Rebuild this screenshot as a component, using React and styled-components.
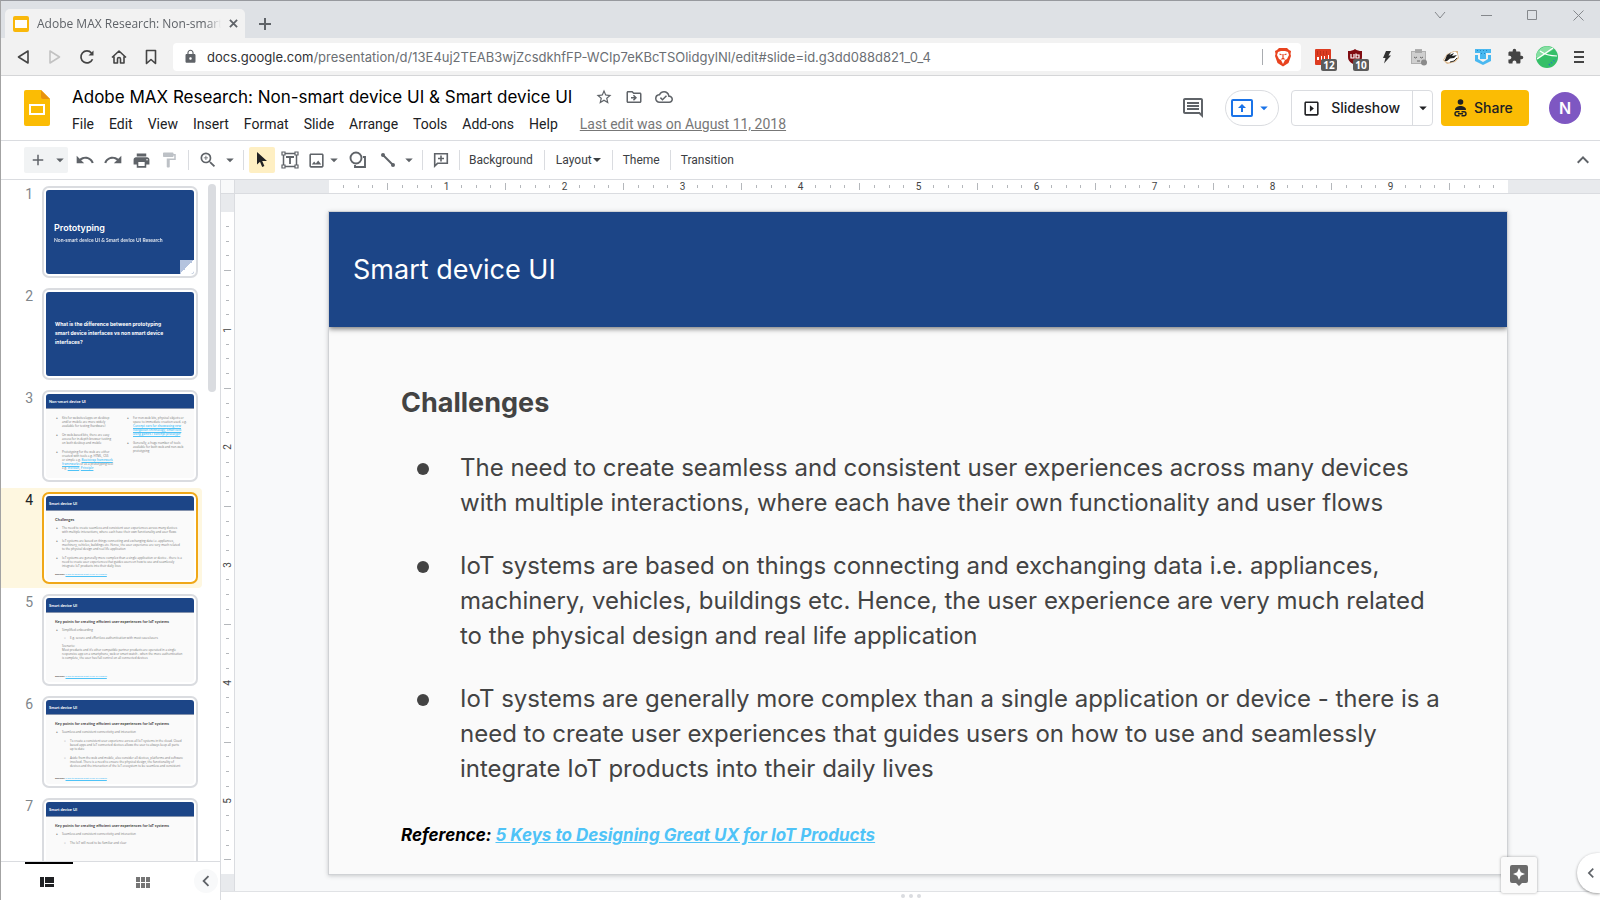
import React from 'react';
import styled, { createGlobalStyle, css } from 'styled-components';
import {
  MdUndo, MdRedo, MdPrint, MdFormatPaint, MdZoomIn, MdArrowDropDown, MdAdd, MdLock, MdExtension,
  MdStarBorder, MdOutlineDriveFileMove, MdOutlineCloudDone, MdOutlineComment, MdOutlineSlideshow,
  MdOutlinePhoto, MdKeyboardArrowUp, MdChevronLeft,
} from 'react-icons/md';

const GlobalStyle = createGlobalStyle`
  * { box-sizing: border-box; }
  body { margin: 0; font-family: Roboto, "Liberation Sans", sans-serif; color: #202124; background: #fff; }
  button { border: 0; padding: 0; margin: 0; background: none; font: inherit; color: inherit; }
  a { color: inherit; }
  h1, h2, ul, ol, p { margin: 0; padding: 0; font: inherit; }
  ul, ol { list-style: none; }
  svg { display: block; flex: none; }
`;

const uiFont = '"Open Sans", "Noto Sans", sans-serif';
const slideFont = 'Inter, "Open Sans", sans-serif';
const miniFont = 'Lato, "Open Sans", sans-serif';
const blue = '#1c4587';
const linkBlue = '#4fc3f7';

const Window = styled.div`
  display: flex;
  flex-direction: column;
  height: 100vh;
  overflow: hidden;
  border-top: 1px solid #97999e;
  border-left: 1px solid #a3a3a3;
`;

/* Browser chrome */
const TabStrip = styled.div`
  display: flex;
  align-items: flex-end;
  height: 37px;
  padding-left: 4px;
  background: #dee1e5;
`;
const Tab = styled.div`
  display: flex;
  align-items: center;
  width: 240px;
  height: 29px;
  padding-left: 8px;
  border-radius: 5px 5px 0 0;
  background: #f2f2f2;
`;
const TabTitle = styled.span`
  width: 184px;
  margin: 0 3px 0 8px;
  overflow: hidden;
  white-space: nowrap;
  font: 12px/20px ${uiFont};
  color: #5f6368;
  mask-image: linear-gradient(to right, #000 92%, transparent);
`;
const IconButton = styled.button`
  display: flex;
  align-items: center;
  justify-content: center;
  width: ${(p) => p.$w || 32}px;
  height: ${(p) => p.$h || 28}px;
  flex: none;
  color: ${(p) => p.$color || '#5f6368'};
  background: ${(p) => p.$bg || 'none'};
  border-radius: 2px;
`;
const WindowControls = styled.div`
  display: flex;
  align-self: flex-start;
  margin-left: auto;
  margin-right: -1px;
`;
const NavBar = styled.div`
  display: flex;
  align-items: center;
  height: 38px;
  padding-left: 6px;
  padding-right: 5px;
  background: #f2f2f2;
  border-bottom: 1px solid #d5d6d8;
`;
const UrlBox = styled.form`
  display: flex;
  align-items: center;
  flex: 1;
  height: 28px;
  margin: 0 6px;
  padding-left: 10px;
  background: #fff;
  border-radius: 4px;
`;
const UrlText = styled.div`
  flex: 1;
  margin-left: 9px;
  font: 13px/20px Inter, sans-serif;
  white-space: nowrap;
  color: #6b6f74;
  b { font-weight: 400; color: #303134; }
`;
const UrlEnd = styled.div`
  display: flex;
  align-items: center;
  height: 16px;
  padding: 0 9px 0 11px;
  border-left: 1px solid #a9acb0;
`;
const ExtButton = styled(IconButton)`
  position: relative;
`;
const Badge = styled.span`
  position: absolute;
  right: 2px;
  bottom: 0;
  width: 16px;
  border-radius: 2px;
  background: #5c5c5c;
  color: #fff;
  font: 700 10px/12px ${uiFont};
  text-align: center;
`;

/* Document header */
const Header = styled.header`
  display: flex;
  align-items: center;
  height: 65px;
  padding: 0 19px 0 23px;
  border-bottom: 1px solid #dadce0;
  background: #fff;
`;
const TitleBlock = styled.div`
  display: flex;
  flex-direction: column;
  gap: 4px;
  margin-left: 22px;
  padding-top: 3px;
  flex: 1;
`;
const TitleRow = styled.div`
  display: flex;
  align-items: center;
  height: 24px;
  color: #5f6368;
`;
const DocTitle = styled.h1`
  margin-right: 17px;
  font: 17px/24px Inter, sans-serif;
  color: #000;
  white-space: nowrap;
`;
const MenuRow = styled.nav`
  display: flex;
  align-items: center;
  gap: 15px;
  height: 22px;
  font-size: 14px;
  line-height: 22px;
  white-space: nowrap;
`;
const LastEdit = styled.a`
  margin-left: 7px;
  color: #777;
`;
const Actions = styled.div`
  display: flex;
  align-items: center;
  height: 36px;
  font: 500 14px/20px Inter, sans-serif;
`;
const Pill = styled.button`
  display: flex;
  align-items: center;
  justify-content: center;
  gap: 2px;
  width: 54px;
  height: 36px;
  margin: 0 12px 0 20px;
  border: 1px solid #dadce0;
  border-radius: 18px;
  color: #1a73e8;
`;
const SplitButton = styled.div`
  display: flex;
  height: 36px;
  border: 1px solid #dadce0;
  border-radius: 4px;
`;
const SlideshowButton = styled.button`
  display: flex;
  align-items: center;
  gap: 10px;
  padding: 0 12px 0 10px;
`;
const SplitArrow = styled.button`
  display: flex;
  align-items: center;
  justify-content: center;
  width: 20px;
  border-left: 1px solid #dadce0;
`;
const ShareButton = styled.button`
  display: flex;
  align-items: center;
  gap: 6px;
  height: 36px;
  width: 88px;
  margin: 0 20px 0 8px;
  padding-left: 12px;
  border-radius: 4px;
  background: #fbbc04;
`;
const Avatar = styled.button`
  width: 32px;
  height: 32px;
  border-radius: 50%;
  background: #7e57c2;
  color: #fff;
  font: 600 16px/32px Inter, sans-serif;
`;

/* Toolbar */
const Toolbar = styled.div`
  display: flex;
  align-items: center;
  height: 39px;
  padding: 0 7px 0 23px;
  border-bottom: 1px solid #dadce0;
  color: #5f6368;
`;
const Divider = styled.span`
  width: 1px;
  height: 20px;
  flex: none;
  margin: 0 ${(p) => p.$gap || 5}px;
  background: #dadce0;
`;
const TextButton = styled.button`
  display: flex;
  align-items: center;
  height: 26px;
  padding: 0 4px;
  font: 12px/16px Roboto, sans-serif;
  color: #3c4043;
`;
const AddGroup = styled.div`
  display: flex;
  margin-right: 3px;
  background: #f1f3f4;
  border-radius: 2px;
`;
const Spacer = styled.span`
  flex: ${(p) => p.$grow || 1};
`;

/* Workspace */
const Workspace = styled.main`
  display: flex;
  flex: 1;
  min-height: 0;
`;
const Sidebar = styled.aside`
  display: flex;
  flex-direction: column;
  width: 220px;
  flex: none;
  border-right: 1px solid #dadce0;
`;
const Film = styled.div`
  display: flex;
  flex: 1;
  min-height: 0;
  overflow: hidden;
  gap: 6px;
`;
const FilmList = styled.ol`
  display: flex;
  flex-direction: column;
  gap: 2px;
  padding-top: 2px;
  width: 201px;
`;
const FilmItem = styled.li`
  display: flex;
  flex: none;
  height: 100px;
  padding-top: 4px;
  border-radius: 0 4px 4px 0;
  background: ${(p) => (p.$active ? '#fef7e0' : 'none')};
`;
const SlideNumber = styled.span`
  width: 41px;
  padding: 0 9px 0 0;
  text-align: right;
  font-size: 14px;
  line-height: 16px;
  color: ${(p) => (p.$active ? '#202124' : '#80868b')};
`;
const Card = styled.div`
  width: 156px;
  height: 92px;
  padding: 2px;
  border: 2px solid ${(p) => (p.$active ? '#f0a818' : '#dadce0')};
  border-radius: 7px;
  background: #fff;
`;
const Thumb = styled.div`
  position: relative;
  height: 84px;
  overflow: hidden;
  border-radius: 3px;
  background: ${(p) => (p.$cover ? blue : '#fafafa')};
  color: ${(p) => (p.$cover ? '#fff' : '#777')};
  font: 3px/4px ${uiFont};
  white-space: nowrap;
`;
const CoverTitle = styled.div`
  padding: 32px 8px 2px;
  font: 600 9px/12px ${slideFont};
`;
const CoverSub = styled.div`
  padding: 0 8px;
  font: 700 5px/8px ${miniFont};
  opacity: 0.85;
`;
const CoverText = styled.div`
  padding: 28px 9px;
  font: 700 5px/9px ${slideFont};
`;
const Fold = styled.span`
  position: absolute;
  right: 0;
  bottom: 0;
  width: 14px;
  height: 14px;
  background: linear-gradient(135deg, #b4c3de 50%, #fff 50%);
`;
const ThumbHead = styled.div`
  height: 15px;
  padding-left: 3px;
  background: ${blue};
  border-bottom: 1px solid #8492ac;
  color: #fff;
  font: 700 4px/15px ${miniFont};
`;
const ThumbHeading = styled.div`
  height: 5px;
  margin: 6px 0 4px 9px;
  font: 700 4px/5px ${miniFont};
  color: #444;
`;
const MiniList = styled.ul`
  display: flex;
  flex-direction: column;
  gap: ${(p) => p.$gap || 5}px;
  margin-left: 16px;
`;
const MiniItem = styled.li`
  position: relative;
  padding-left: ${(p) => (p.$sub ? 8 : 0)}px;
  &::before {
    content: "${(p) => (p.$sub ? '○' : p.$plain ? '' : '●')}";
    position: absolute;
    left: ${(p) => (p.$sub ? 2 : -6)}px;
  }
`;
const MiniLine = styled.span`
  display: block;
`;
const MiniLink = styled.a`
  color: ${linkBlue};
  font-weight: 600;
`;
const MiniColumns = styled.div`
  display: grid;
  grid-template-columns: 71px 1fr;
  padding-top: 7px;
`;
const MiniRef = styled.div`
  position: absolute;
  left: 9px;
  bottom: 3px;
  font-size: 2px;
  font-weight: 700;
  font-style: italic;
  color: #444;
`;
const ScrollThumb = styled.div`
  width: 8px;
  height: 208px;
  margin-top: 4px;
  border-radius: 4px;
  background: #dadce0;
`;
const ViewBar = styled.div`
  display: flex;
  align-items: center;
  height: 39px;
  flex: none;
  border-top: 1px solid #dadce0;
  padding: 0 2px 0 24px;
`;
const ViewTab = styled.button`
  display: flex;
  align-items: center;
  justify-content: center;
  width: 48px;
  height: 38px;
  padding-right: ${(p) => (p.$active ? 4 : 0)}px;
  border-top: 2px solid ${(p) => (p.$active ? '#000' : 'transparent')};
  color: ${(p) => (p.$active ? '#202124' : '#757575')};
`;
const CollapseButton = styled.button`
  display: flex;
  align-items: center;
  justify-content: center;
  width: 24px;
  height: 24px;
  border-radius: 50%;
  background: #f8f9fa;
  color: #5f6368;
`;

/* Rulers */
const rulerBar = css`
  display: flex;
  background: #e8eaed;
  font: 10px/12px Roboto, sans-serif;
  color: #444;
`;
const VColumn = styled.div`
  display: flex;
  flex-direction: column;
  flex: none;
`;
const RulerCorner = styled.div`
  height: 14px;
  background: #f8f9fa;
  border-right: 1px solid #dadce0;
  border-bottom: 1px solid #dadce0;
`;
const VRuler = styled.div`
  ${rulerBar}
  flex: 1;
  flex-direction: column;
  width: 14px;
  padding: 18px 0 17px;
  border-right: 1px solid #dadce0;
`;
const RulerFoot = styled.div`
  height: 9px;
  border-top: 1px solid #e0e2e5;
`;
const HRuler = styled.div`
  ${rulerBar}
  height: 14px;
  flex: none;
  padding: 0 92px 0 94px;
  border-bottom: 1px solid #dadce0;
`;
const Track = styled.div`
  display: flex;
  flex: 1;
  flex-direction: ${(p) => (p.$vertical ? 'column' : 'row')};
  padding: ${(p) => (p.$vertical ? '7px 0' : '0 7px')};
  background: #fff;
`;
const Cell = styled.span`
  display: flex;
  flex: 1 1 0;
  min-width: 0;
  min-height: 0;
  align-items: center;
  justify-content: center;
`;
const Tick = styled.i`
  width: ${(p) => (p.$vertical ? (p.$long ? 7 : 3) : 1)}px;
  height: ${(p) => (p.$vertical ? 1 : p.$long ? 7 : 3)}px;
  background: #b4b7bb;
`;
const RulerLabel = styled.span`
  transform: ${(p) => (p.$vertical ? 'rotate(-90deg)' : 'none')};
`;

/* Editing canvas */
const Editor = styled.section`
  position: relative;
  display: flex;
  flex-direction: column;
  flex: 1;
  min-width: 0;
`;
const Canvas = styled.div`
  flex: 1;
  min-height: 0;
  padding: 17px 92px 16px 93px;
  background: #f8f9fa;
  overflow: hidden;
`;
const Slide = styled.article`
  height: 100%;
  overflow: hidden;
  border: 1px solid #d0d2d5;
  background: #fafafa;
  box-shadow: 0 1px 4px rgba(60, 64, 67, 0.25);
  font-family: ${slideFont};
  color: #434343;
  white-space: nowrap;
`;
const SlideHead = styled.h1`
  display: flex;
  align-items: center;
  height: 115px;
  padding-left: 24px;
  background: ${blue};
  box-shadow: 0 2px 5px rgba(0, 0, 0, 0.5);
  color: #fff;
  font-size: 27px;
  line-height: 36px;
`;
const SlideBody = styled.div`
  padding: 58px 0 0 72px;
  font-size: 24px;
  line-height: 35px;
`;
const SlideHeading = styled.h2`
  margin-bottom: 30px;
  font-size: 27px;
  line-height: 35px;
  font-weight: 700;
`;
const Bullets = styled.ul`
  display: flex;
  flex-direction: column;
  gap: 28px;
  margin-left: 16px;
`;
const Bullet = styled.li`
  display: grid;
  grid-template-columns: 12px 1fr;
  column-gap: 31px;
  &::before {
    content: "";
    width: 12px;
    height: 12px;
    margin-top: 13px;
    border-radius: 50%;
    background: #434343;
  }
`;
const Line = styled.span`
  display: block;
`;
const Reference = styled.p`
  margin-top: 36px;
  font-size: 17px;
  line-height: 26px;
  font-weight: 700;
  font-style: italic;
  color: #000;
  a { color: ${linkBlue}; }
`;
const NotesHandle = styled.div`
  display: flex;
  align-items: center;
  justify-content: center;
  gap: 4px;
  height: 9px;
  padding-right: 14px;
  border-top: 1px solid #e0e2e5;
  background: #fff;
  i { width: 4px; height: 4px; border-radius: 50%; background: #dadce0; }
`;
const ExploreButton = styled.button`
  position: absolute;
  right: 63px;
  bottom: 7px;
  display: flex;
  align-items: center;
  justify-content: center;
  width: 36px;
  height: 36px;
  border-radius: 2px;
  background: #fafafa;
  box-shadow: 0 0 3px rgba(0, 0, 0, 0.35);
`;
const PanelToggle = styled.button`
  position: absolute;
  right: 0;
  bottom: 7px;
  display: flex;
  align-items: center;
  width: 23px;
  height: 40px;
  padding-left: 4px;
  border-radius: 20px 0 0 20px;
  background: #fff;
  box-shadow: 0 1px 3px rgba(0, 0, 0, 0.4);
  color: #5f6368;
`;

const Icon = ({ w = 18, h, box = '0 0 18 18', children, ...rest }) => (
  <svg width={w} height={h || w} viewBox={box} fill="none" stroke="currentColor" aria-hidden="true" {...rest}>{children}</svg>
);

const Favicon = () => (
  <Icon w={16} box="0 0 16 16" stroke="none"><rect width="16" height="16" rx="2" fill="#f9b80b" /><rect x="2" y="4" width="12" height="8" fill="#fff" /></Icon>
);
const SlidesLogo = () => (
  <Icon w={26} h={36} box="0 0 26 36" stroke="none">
    <path d="M2 0h15l9 9v25a2 2 0 0 1-2 2H2a2 2 0 0 1-2-2V2a2 2 0 0 1 2-2z" fill="#fbbc04" />
    <path d="M17 0l9 9h-7a2 2 0 0 1-2-2z" fill="#e8930c" />
    <path d="M5 14h16v11H5zM7 16v7h12v-7z" fill="#fff" fillRule="evenodd" />
  </Icon>
);
const BraveIcon = () => (
  <Icon w={18} h={20} box="0 0 18 20" stroke="none">
    <path d="M5 1h8l2 2 2 1-.5 3 .5 2-2.500 7L9 19.500 3.500 16 1 9l.5-2L1 4l2-1z" fill="#e8431f" />
    <path d="M4 5l3-1h4l3 1 1 3-2 4-2 1-2 4-2-4-2-1-2-4z" fill="#fff" />
    <path d="M5.500 7l2 .700M12.500 7l-2 .700M9 7v3.500M7.500 12.500L9 11l1.500 1.500" stroke="#e8431f" strokeWidth="1.200" />
  </Icon>
);
const MenuCap = () => (
  <Icon><path d="M4 4h10M4 9h10M4 14h10" stroke="#444" strokeWidth="2" /></Icon>
);

const menus = ['File', 'Edit', 'View', 'Insert', 'Format', 'Slide', 'Arrange', 'Tools', 'Add-ons', 'Help'];

const bullets = [
  ['The need to create seamless and consistent user experiences across many devices', 'with multiple interactions, where each have their own functionality and user flows'],
  ['IoT systems are based on things connecting and exchanging data i.e. appliances,', 'machinery, vehicles, buildings etc. Hence, the user experience are very much related', 'to the physical design and real life application'],
  ['IoT systems are generally more complex than a single application or device - there is a', 'need to create user experiences that guides users on how to use and seamlessly', 'integrate IoT products into their daily lives'],
];

const keyPoints = 'Key points for creating efficient user experiences for IoT systems';

const Mini = ({ lines, ...rest }) => (
  <MiniItem {...rest}>{lines.map((l, i) => <MiniLine key={i}>{l}</MiniLine>)}</MiniItem>
);

const ContentThumb = ({ title = 'Smart device UI', heading, reference, children }) => (
  <Thumb>
    <ThumbHead>{title}</ThumbHead>
    {heading && <ThumbHeading>{heading}</ThumbHeading>}
    {children}
    {reference && <MiniRef>Reference: <MiniLink href="#ref">5 Keys to Designing Great UX for IoT Products</MiniLink></MiniRef>}
  </Thumb>
);

const thumbs = [
  <Thumb $cover>
    <CoverTitle>Prototyping</CoverTitle>
    <CoverSub>Non-smart device UI &amp; Smart device UI Research</CoverSub>
    <Fold />
  </Thumb>,
  <Thumb $cover>
    <CoverText>What is the difference between prototyping<br />smart device interfaces vs non smart device<br />interfaces?</CoverText>
  </Thumb>,
  <ContentThumb title="Non-smart device UI">
    <MiniColumns>
      <MiniList>
        <Mini lines={['Kits for websites/apps on desktop', 'and/or mobile are more widely', 'available for testing (hardware)']} />
        <Mini lines={['On web-based kits, there are easy', 'access for in-depth browser testing', 'on both desktop and mobile']} />
        <Mini lines={['Prototyping for the web are either', 'created with tools e.g. HTML, CSS', <>or simple e.g. <MiniLink href="#a">Bootstrap framework</MiniLink></>, <><MiniLink href="#b">frameworks</MiniLink> or as a prototyping tool</>, <>e.g. <MiniLink href="#c">InVision</MiniLink>, <MiniLink href="#d">Principle</MiniLink></>]} />
      </MiniList>
      <MiniList>
        <Mini lines={['For non-web kits, physical objects or', 'space to immediate creation used. e.g.', <MiniLink href="#e">Concept cars for showcasing new</MiniLink>, <MiniLink href="#f">navigation technology, Smart kits</MiniLink>, <MiniLink href="#g">using games / concept prototype</MiniLink>]} />
        <Mini lines={['Generally, a huge number of tools', 'available for both web and non-web', 'prototyping']} />
      </MiniList>
    </MiniColumns>
  </ContentThumb>,
  <ContentThumb heading="Challenges" reference>
    <MiniList>{bullets.map((b) => <Mini key={b[0]} lines={b} />)}</MiniList>
  </ContentThumb>,
  <ContentThumb heading={keyPoints} reference>
    <MiniList $gap={4}>
      <Mini lines={['Simplified onboarding']} />
      <Mini $sub lines={['E.g. secure and effortless authentication with most cases/users']} />
      <Mini $plain lines={['Scenario:', 'Most products and it\u2019s other compatible partner products are operated in a single', 'responsive app on a smartphone, web or smart watch - when the more authentication', 'is complete, the user has full control on all connected devices']} />
    </MiniList>
  </ContentThumb>,
  <ContentThumb heading={keyPoints} reference>
    <MiniList>
      <Mini lines={['Seamless and consistent connectivity and interaction']} />
      <Mini $sub lines={['To create a consistent user experience across all IoT systems in the cloud. Cloud', 'based apps and IoT connected devices allows the user to always keep all parts', 'up to date']} />
      <Mini $sub lines={['Aside from the web and mobile, also consider all devices, platforms and software', 'involved. There is a need to ensure the physical design, the functionality of', 'devices and the interaction of the IoT ecosystem to be seamless and consistent']} />
    </MiniList>
  </ContentThumb>,
  <ContentThumb heading={keyPoints}>
    <MiniList>
      <Mini lines={['Seamless and consistent connectivity and interaction']} />
      <Mini $sub lines={['The IoT will need to be familiar and clear']} />
    </MiniList>
  </ContentThumb>,
];

const Ticks = ({ count, vertical }) => (
  <Track $vertical={vertical}>
    {Array.from({ length: count }, (_, i) => i + 1).map((n) => (
      <Cell key={n}>
        {n % 8 === 0
          ? <RulerLabel $vertical={vertical}>{n / 8}</RulerLabel>
          : <Tick $vertical={vertical} $long={n % 8 === 4} />}
      </Cell>
    ))}
  </Track>
);

const DropArrow = ({ w = 18, label }) => (
  <IconButton $w={w} $h={26} aria-label={label}><MdArrowDropDown size={18} /></IconButton>
);

function BrowserChrome() {
  return (
    <>
      <TabStrip>
        <Tab>
          <Favicon />
          <TabTitle>Adobe MAX Research: Non-smart device UI</TabTitle>
          <IconButton $w={18} $h={18} aria-label="Close tab"><Icon w={9} box="0 0 10 10"><path d="M1 1l8 8M9 1l-8 8" strokeWidth="2" /></Icon></IconButton>
        </Tab>
        <IconButton $w={40} $h={29} aria-label="New tab"><Icon w={12} box="0 0 12 12"><path d="M6 0v12M0 6h12" strokeWidth="2" /></Icon></IconButton>
        <WindowControls>
          <IconButton $w={46} $color="#85888c" aria-label="Tab search"><Icon w={12} box="0 0 12 12"><path d="M1 3l5 6 5-6" /></Icon></IconButton>
          <IconButton $w={46} $color="#85888c" aria-label="Minimize"><Icon w={11} box="0 0 11 11"><path d="M0 5.500h11" /></Icon></IconButton>
          <IconButton $w={46} $color="#85888c" aria-label="Maximize"><Icon w={10} box="0 0 10 10"><path d="M.5.5h9v9h-9z" /></Icon></IconButton>
          <IconButton $w={46} $color="#85888c" aria-label="Close"><Icon w={11} box="0 0 11 11"><path d="M.5.5l10 10M10.500.5l-10 10" /></Icon></IconButton>
        </WindowControls>
      </TabStrip>
      <NavBar>
        <IconButton $color="#444" aria-label="Back"><Icon w={14} box="0 0 14 14"><path d="M12 1v12L2.500 7z" strokeWidth="1.600" strokeLinejoin="round" /></Icon></IconButton>
        <IconButton $color="#c2c2c2" aria-label="Forward"><Icon w={14} box="0 0 14 14"><path d="M2 1v12l9.500-6z" strokeWidth="1.600" strokeLinejoin="round" /></Icon></IconButton>
        <IconButton $color="#444" aria-label="Reload"><Icon w={16} box="0 0 16 16"><path d="M13.500 10.200A6 6 0 1 1 12.500 4" strokeWidth="1.700" /><path d="M9.500 6.500h5v-5z" fill="currentColor" stroke="none" /></Icon></IconButton>
        <IconButton $color="#444" aria-label="Home"><Icon w={16} box="0 0 16 16"><path d="M1 8.500L8 2l7 6.500M3 7.500V14h3.500v-4a1.500 1.500 0 0 1 3 0v4H13V7.500" strokeWidth="1.600" strokeLinejoin="round" /></Icon></IconButton>
        <IconButton $color="#444" aria-label="Bookmark"><Icon w={16} box="0 0 16 16"><path d="M3.500 1.500h9v13L8 10.500l-4.500 4z" strokeWidth="1.600" strokeLinejoin="round" /></Icon></IconButton>
        <UrlBox>
          <MdLock size={15} color="#5f6368" />
          <UrlText><b>docs.google.com</b>/presentation/d/13E4uj2TEAB3wjZcsdkhfFP-WCIp7eKBcTSOlidgylNl/edit#slide=id.g3dd088d821_0_4</UrlText>
          <UrlEnd><BraveIcon /></UrlEnd>
        </UrlBox>
        <ExtButton aria-label="Extension">
          <Icon w={16} box="0 0 16 16" stroke="none"><rect width="16" height="16" rx="1" fill="#dd3b20" /><path d="M2 3h12M2 5h12" stroke="#a52512" strokeDasharray="1 2" /><path d="M2 8h2v3H2zM6 7h1v4H6zM9 7h1v4H9zM13 6h1v5h-1z" fill="#fff" /></Icon>
          <Badge>12</Badge>
        </ExtButton>
        <ExtButton aria-label="Ad blocker">
          <Icon w={16} box="0 0 16 16" stroke="none"><path d="M8 0c2 1.500 4 2 7 2v6c0 4-3 6-7 8-4-2-7-4-7-8V2c3 0 5-.5 7-2z" fill="#800d12" /><path d="M4 5v4h3V5M9 4.500v5M9 9h3V6H9" stroke="#fff" strokeWidth="1.200" fill="none" /></Icon>
          <Badge>10</Badge>
        </ExtButton>
        <ExtButton aria-label="Performance"><Icon w={14} box="0 0 14 14" stroke="none"><path d="M6 1h5L8.500 5.500H11L4 13.500 5.500 8H3z" fill="#333" /></Icon></ExtButton>
        <ExtButton aria-label="Clipboard">
          <Icon w={16} h={18} box="0 0 16 18" stroke="none"><path d="M0 3h4V1h7v2h4v13H0z" fill="#b0b0b0" /><path d="M1 4h13v11H1z" fill="#cfcfcf" /><path d="M4 2h7v3H4z" fill="#a8a8a8" /><path d="M3 9l1.500 1L6 9M9 9l1.500 1L12 9M6 13h3" stroke="#666" fill="none" /><circle cx="13" cy="14.500" r="3" fill="#8a8a8a" /></Icon>
        </ExtButton>
        <ExtButton aria-label="Privacy">
          <Icon w={18} h={16} box="0 0 18 16" stroke="none"><path d="M1 11L5 5l7-3 4 0 0 3 1 4-4 4-8 2z" fill="#d9b58a" /><path d="M2 11l4-6 7-2.500 2 1.500 1 4-4 4-6 1.500z" fill="#fff" /><path d="M2.500 12L5 6l4-2.500L7.500 6 12 4l-2 3 5-1-3 3-4 .5L5 12z" fill="#222" /><path d="M8 13l4-1 3-3" stroke="#333" fill="none" /></Icon>
        </ExtButton>
        <ExtButton aria-label="Shield">
          <Icon w={16} box="0 0 16 16" stroke="none"><path d="M0 0h16v4h-5v6H5V4H0z" fill="#4ab8f0" /><path d="M0 6h3v4l5 3 5-3V6h3v6l-8 4-8-4z" fill="#4ab8f0" /><path d="M2 1.500h12M6 4.500h4" stroke="#2586c0" strokeDasharray="1 2" /></Icon>
        </ExtButton>
        <ExtButton $color="#444" aria-label="Extensions"><MdExtension size={17} /></ExtButton>
        <ExtButton aria-label="Profile">
          <Icon w={22} box="0 0 22 22" stroke="none"><circle cx="11" cy="11" r="11" fill="#35bf68" /><path d="M0 11a11 11 0 0 1 18-8L2 13z" fill="#86dfa2" /><path d="M1 13L17 2M4 5c4 3 11 5 17 5" stroke="#fff" strokeWidth="1.200" fill="none" /><path d="M13 19l7-6" stroke="#2878c8" strokeWidth="2" strokeDasharray="1 2" /></Icon>
        </ExtButton>
        <ExtButton aria-label="Browser menu"><MenuCap /></ExtButton>
      </NavBar>
    </>
  );
}

function DocHeader() {
  return (
    <Header>
      <SlidesLogo />
      <TitleBlock>
        <TitleRow>
          <DocTitle>Adobe MAX Research: Non-smart device UI &amp; Smart device UI</DocTitle>
          <IconButton $w={30} $h={24} aria-label="Star"><MdStarBorder size={18} /></IconButton>
          <IconButton $w={30} $h={24} aria-label="Move"><MdOutlineDriveFileMove size={18} /></IconButton>
          <IconButton $w={30} $h={24} aria-label="Document status"><MdOutlineCloudDone size={18} /></IconButton>
        </TitleRow>
        <MenuRow>
          {menus.map((m) => <button key={m}>{m}</button>)}
          <LastEdit href="#history">Last edit was on August 11, 2018</LastEdit>
        </MenuRow>
      </TitleBlock>
      <Actions>
        <IconButton $w={24} aria-label="Comments"><MdOutlineComment size={24} /></IconButton>
        <Pill aria-label="Present to a meeting">
          <Icon w={22} h={18} box="0 0 22 18"><rect x="1" y="1" width="20" height="16" rx="1" strokeWidth="2" /><path d="M11 13V7" strokeWidth="2" /><path d="M7 9l4-4 4 4z" fill="currentColor" stroke="none" /></Icon>
          <MdArrowDropDown size={18} />
        </Pill>
        <SplitButton>
          <SlideshowButton><MdOutlineSlideshow size={19} />Slideshow</SlideshowButton>
          <SplitArrow aria-label="Slideshow options"><MdArrowDropDown size={18} /></SplitArrow>
        </SplitButton>
        <ShareButton>
          <Icon w={15} h={18} box="0 0 15 18"><circle cx="7.500" cy="3" r="2.800" fill="currentColor" stroke="none" /><path d="M2 11c0-3 3-4 5.500-4s5.500 1 5.500 4z" fill="currentColor" stroke="none" /><path d="M6.500 12.800H4a2 2 0 0 0 0 4h2.500M8.500 12.800H11a2 2 0 0 1 0 4H8.500M5 14.800h5" strokeWidth="1.400" /></Icon>
          Share
        </ShareButton>
        <Avatar aria-label="Account">N</Avatar>
      </Actions>
    </Header>
  );
}

function SlideToolbar() {
  return (
    <Toolbar>
      <AddGroup>
        <IconButton $w={28} $h={26} aria-label="New slide"><MdAdd size={18} /></IconButton>
        <DropArrow w={16} label="New slide layout" />
      </AddGroup>
      <IconButton $w={28} aria-label="Undo"><MdUndo size={20} /></IconButton>
      <IconButton $w={28} aria-label="Redo"><MdRedo size={20} /></IconButton>
      <IconButton $w={28} aria-label="Print"><MdPrint size={19} /></IconButton>
      <IconButton $w={28} $color="#bdc1c6" aria-label="Paint format"><MdFormatPaint size={18} /></IconButton>
      <Divider />
      <IconButton $w={28} aria-label="Zoom"><MdZoomIn size={20} /></IconButton>
      <DropArrow w={16} label="Zoom level" />
      <Divider />
      <IconButton $w={26} $h={26} $bg="#feefc3" $color="#202124" aria-label="Select">
        <Icon w={12} h={16} box="0 0 12 16" stroke="none"><path d="M1 0v12.500l3-2.700 2.200 5.200 2.200-1L6.200 9H11z" fill="currentColor" /></Icon>
      </IconButton>
      <IconButton $w={30} aria-label="Text box">
        <Icon><path d="M2.500 2.500h13v13h-13z" strokeWidth="1.500" /><path d="M5 6h8M9 6v7" strokeWidth="1.800" /><path d="M1 1h3v3H1zM14 1h3v3h-3zM1 14h3v3H1zM14 14h3v3h-3z" fill="#fff" strokeWidth="1.200" /></Icon>
      </IconButton>
      <IconButton $w={22} aria-label="Insert image"><MdOutlinePhoto size={19} /></IconButton>
      <DropArrow w={14} label="Image options" />
      <IconButton $w={34} aria-label="Shape">
        <Icon><circle cx="7" cy="7" r="5.500" strokeWidth="1.900" /><path d="M14 6h2v10H6v-2" strokeWidth="1.900" /></Icon>
      </IconButton>
      <IconButton $w={26} aria-label="Line">
        <Icon w={16} box="0 0 16 16"><path d="M3 3l10 10" strokeWidth="2" /><circle cx="3" cy="3" r="2" fill="currentColor" stroke="none" /><circle cx="13" cy="13" r="2" fill="currentColor" stroke="none" /></Icon>
      </IconButton>
      <DropArrow w={16} label="Line options" />
      <Divider />
      <IconButton $w={26} aria-label="Add comment">
        <Icon w={16} box="0 0 16 16"><path d="M1.700 1.700h12.600v9.600H4.500L1.700 14z" strokeWidth="1.600" /><path d="M8 3.500v6M5 6.500h6" strokeWidth="1.600" /></Icon>
      </IconButton>
      <Divider />
      <TextButton>Background</TextButton>
      <Divider $gap={7} />
      <TextButton>Layout<Icon w={10} h={6} box="0 0 10 6" stroke="none"><path d="M1 1h8L5 5z" fill="currentColor" /></Icon></TextButton>
      <Divider $gap={6} />
      <TextButton>Theme</TextButton>
      <Divider $gap={6} />
      <TextButton>Transition</TextButton>
      <Spacer />
      <IconButton $w={20} aria-label="Hide menus"><MdKeyboardArrowUp size={24} /></IconButton>
    </Toolbar>
  );
}

export default function App() {
  return (
    <Window>
      <GlobalStyle />
      <BrowserChrome />
      <DocHeader />
      <SlideToolbar />
      <Workspace>
        <Sidebar>
          <Film>
            <FilmList>
              {thumbs.map((thumb, i) => (
                <FilmItem key={i} $active={i === 3}>
                  <SlideNumber $active={i === 3}>{i + 1}</SlideNumber>
                  <Card $active={i === 3}>{thumb}</Card>
                </FilmItem>
              ))}
            </FilmList>
            <ScrollThumb />
          </Film>
          <ViewBar>
            <ViewTab $active aria-label="Filmstrip view"><Icon w={14} h={10} box="0 0 14 10" stroke="none"><path d="M0 0h4v10H0zM5 0h9v6H5zM5 7h9v3H5z" fill="currentColor" /></Icon></ViewTab>
            <Spacer $grow={7} />
            <ViewTab aria-label="Grid view"><Icon w={14} h={11} box="0 0 14 11" stroke="none"><path d="M0 0h4v5H0zM5 0h4v5H5zM10 0h4v5h-4zM0 6h4v5H0zM5 6h4v5H5zM10 6h4v5h-4z" fill="currentColor" /></Icon></ViewTab>
            <Spacer $grow={4} />
            <CollapseButton aria-label="Hide filmstrip"><MdChevronLeft size={22} /></CollapseButton>
          </ViewBar>
        </Sidebar>
        <VColumn>
          <RulerCorner />
          <VRuler><Ticks count={44} vertical /></VRuler>
          <RulerFoot />
        </VColumn>
        <Editor>
          <HRuler><Ticks count={79} /></HRuler>
          <Canvas>
            <Slide>
              <SlideHead>Smart device UI</SlideHead>
              <SlideBody>
                <SlideHeading>Challenges</SlideHeading>
                <Bullets>
                  {bullets.map((lines) => (
                    <Bullet key={lines[0]}><div>{lines.map((l) => <Line key={l}>{l}</Line>)}</div></Bullet>
                  ))}
                </Bullets>
                <Reference>Reference: <a href="#reference">5 Keys to Designing Great UX for IoT Products</a></Reference>
              </SlideBody>
            </Slide>
          </Canvas>
          <NotesHandle><i /><i /><i /></NotesHandle>
          <ExploreButton aria-label="Explore">
            <Icon w={18} h={21} box="0 0 18 21" stroke="none"><path d="M2 0h14a2 2 0 0 1 2 2v14a2 2 0 0 1-2 2h-4l-3 3-3-3H2a2 2 0 0 1-2-2V2a2 2 0 0 1 2-2z" fill="#6b6b6b" /><path d="M9 3l1.800 4.200L15 9l-4.200 1.800L9 15l-1.800-4.200L3 9l4.200-1.800z" fill="#fff" /></Icon>
          </ExploreButton>
          <PanelToggle aria-label="Show side panel"><MdChevronLeft size={20} /></PanelToggle>
        </Editor>
      </Workspace>
    </Window>
  );
}
